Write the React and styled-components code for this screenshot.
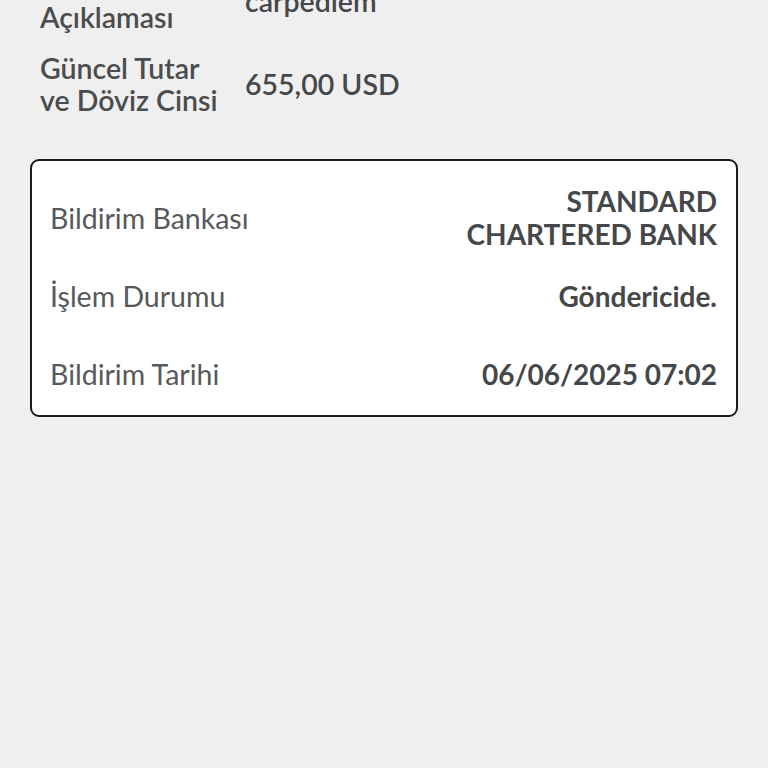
import styled, { createGlobalStyle } from 'styled-components'

const GlobalStyle = createGlobalStyle`
  html, body {
    margin: 0;
    padding: 0;
    background: #efefef;
  }
  body {
    font-family: Lato, "Noto Sans", sans-serif;
    -webkit-font-smoothing: antialiased;
  }
`

const Page = styled.div`
  width: 768px;
  height: 768px;
  overflow: hidden;
  background: #efefef;
`

const Details = styled.div`
  margin-top: -31px;
  padding: 0 40px;
  display: flex;
  flex-direction: column;
  gap: 19px;
`

const DetailRow = styled.div`
  display: grid;
  grid-template-columns: 205px 1fr;
  align-items: center;
`

const DetailLabel = styled.div`
  font-size: 28.5px;
  line-height: 32px;
  font-weight: 600;
  color: #4a4c4e;
`

const DetailValue = styled.div`
  font-size: 28.5px;
  line-height: 32px;
  font-weight: 600;
  color: #45484b;
`

const Card = styled.div`
  margin: 43px 30px 0;
  background: #fff;
  border: 2px solid #1c1c1c;
  border-radius: 9px;
  padding: 18px 19px 2px 18px;
  display: flex;
  flex-direction: column;
`

const CardRow = styled.div`
  min-height: 78px;
  display: flex;
  align-items: center;
  justify-content: space-between;
`

const CardLabel = styled.div`
  font-size: 28.5px;
  line-height: 33px;
  font-weight: 400;
  color: #56595c;
`

const CardValue = styled.div`
  font-size: 28px;
  line-height: 33px;
  font-weight: 700;
  color: #45484b;
  text-align: right;
`

const rows = [
  { label: 'Bildirim Bankası', value: ['STANDARD', 'CHARTERED BANK'] },
  { label: 'İşlem Durumu', value: ['Göndericide.'] },
  { label: 'Bildirim Tarihi', value: ['06/06/2025 07:02'] },
]

export default function App() {
  return (
    <Page>
      <GlobalStyle />
      <Details>
        <DetailRow>
          <DetailLabel>Havale<br />Açıklaması</DetailLabel>
          <DetailValue>carpediem</DetailValue>
        </DetailRow>
        <DetailRow>
          <DetailLabel>Güncel Tutar<br />ve Döviz Cinsi</DetailLabel>
          <DetailValue>655,00 USD</DetailValue>
        </DetailRow>
      </Details>
      <Card>
        {rows.map(row => (
          <CardRow key={row.label}>
            <CardLabel>{row.label}</CardLabel>
            <CardValue>
              {row.value.map(line => <div key={line}>{line}</div>)}
            </CardValue>
          </CardRow>
        ))}
      </Card>
    </Page>
  )
}
